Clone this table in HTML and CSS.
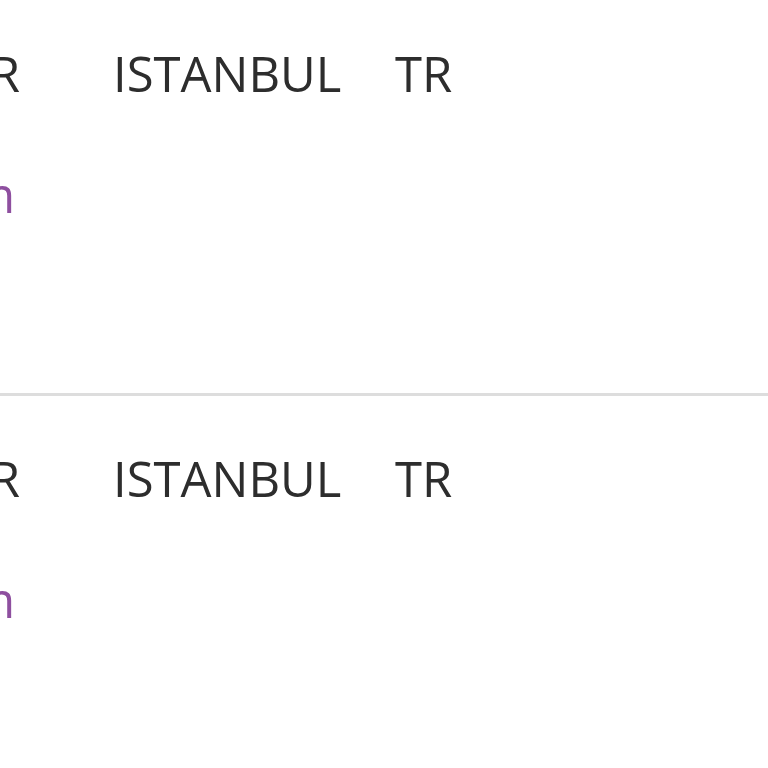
FILE: index.html
```html
<!DOCTYPE html>
<html lang="tr">
<head>
<meta charset="utf-8">
<title>Liste</title>
<link rel="stylesheet" href="styles.css">
</head>
<body>
<div class="table">
  <div class="row first">
    <div class="cell c1">
      <div class="line">TUR</div>
      <div class="line"><a class="link" href="#">Konum</a></div>
    </div>
    <div class="cell c2"><div class="line">ISTANBUL</div></div>
    <div class="cell c3"><div class="line">TR</div></div>
  </div>
  <div class="row">
    <div class="cell c1">
      <div class="line">TUR</div>
      <div class="line"><a class="link" href="#">Konum</a></div>
    </div>
    <div class="cell c2"><div class="line">ISTANBUL</div></div>
    <div class="cell c3"><div class="line">TR</div></div>
  </div>
</div>
</body>
</html>
```
FILE: styles.css
```css
html, body {
  margin: 0;
  padding: 0;
  background: #ffffff;
  overflow: hidden;
}
body {
  font-family: "Open Sans", "Liberation Sans", sans-serif;
  font-size: 49px;
  color: #2d2d2d;
}
.table {
  margin-left: -200px;
  width: 1100px;
}
.row {
  display: grid;
  grid-template-columns: 220px 375px auto;
  padding: 48px 0 165px 0;
  border-bottom: 3px solid #dddddd;
}
.row.first {
  margin-top: -9px;
}
.line {
  height: 68px;
  line-height: 68px;
  white-space: nowrap;
}
.line + .line {
  margin-top: 53px;
}
.c1 {
  text-align: right;
}
.c2 {
  padding-left: 93px;
}
.link {
  color: #8e4f9f;
  text-decoration: none;
  margin-right: 5px;
}
```
